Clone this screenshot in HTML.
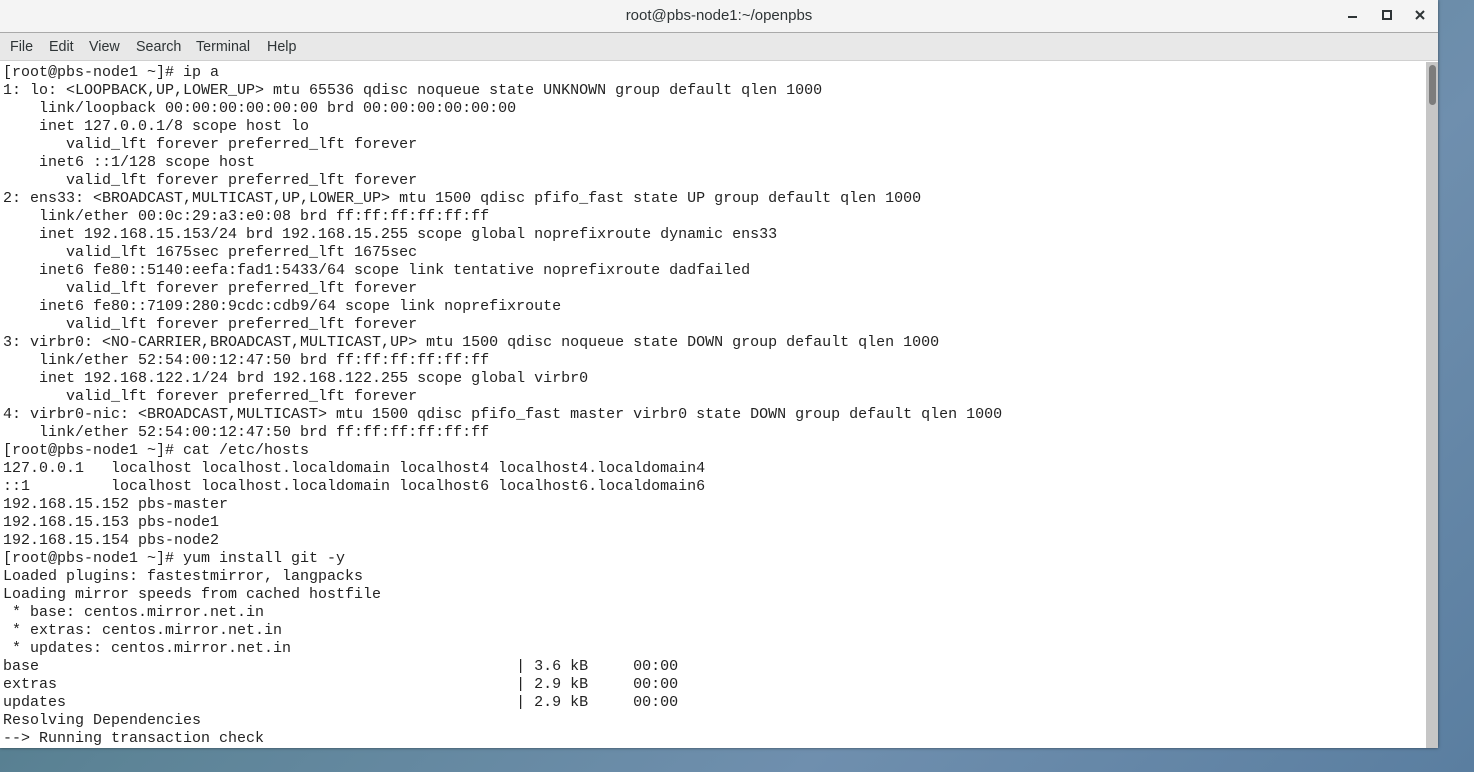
<!DOCTYPE html>
<html><head><style>
body{margin:0;width:1474px;height:772px;overflow:hidden;background:linear-gradient(135deg,#3f6b78 0%,#5d8497 40%,#6f8fae 70%,#5a7ea0 100%);font-family:"Liberation Sans",sans-serif;position:relative}
.win{position:absolute;left:0;top:0;width:1438px;height:748px;background:#fff;box-shadow:0 0 3px rgba(0,0,0,.5)}
.title{position:absolute;left:0;top:0;width:1438px;height:33px;background:#f4f4f4;border-bottom:1px solid #a9a9a9;box-sizing:border-box}
.title .t{position:absolute;left:0;width:1438px;top:7px;text-align:center;font-size:15px;color:#2e3436}
.menu{position:absolute;left:0;top:33px;width:1438px;height:28px;background:#e8e8e8;border-bottom:1px solid #d0d0d0;box-sizing:border-box;font-size:14.3px;color:#2e3436}
.menu span{position:absolute;top:6px}
pre{position:absolute;left:3px;top:64px;margin:0;font-family:"Liberation Mono",monospace;font-size:15px;line-height:18px;color:#222}
.sb{position:absolute;left:1426px;top:62px;width:12px;height:686px;background:#c6c6c6}
.th{position:absolute;left:1429px;top:65px;width:7px;height:40px;background:#7c7c7c;border-radius:4px}
.ctl{position:absolute;top:10px;}
</style></head><body>
<div class="win">
<div class="title"><div class="t">root@pbs-node1:~/openpbs</div>
<div class="ctl" style="left:1348px;top:16px;width:9px;height:2px;background:#2e3436"></div>
<div class="ctl" style="left:1382px;top:10px;width:6px;height:6px;border:2px solid #2e3436"></div>
<svg class="ctl" style="left:1415px;top:10px" width="10" height="10"><path d="M1 1L9 9M9 1L1 9" stroke="#2e3436" stroke-width="2"/></svg>
</div>
<div class="menu"><span style="left:10px">File</span><span style="left:49px">Edit</span><span style="left:89px">View</span><span style="left:136px">Search</span><span style="left:196px">Terminal</span><span style="left:267px">Help</span></div>
<pre>[root@pbs-node1 ~]# ip a
1: lo: &lt;LOOPBACK,UP,LOWER_UP&gt; mtu 65536 qdisc noqueue state UNKNOWN group default qlen 1000
    link/loopback 00:00:00:00:00:00 brd 00:00:00:00:00:00
    inet 127.0.0.1/8 scope host lo
       valid_lft forever preferred_lft forever
    inet6 ::1/128 scope host
       valid_lft forever preferred_lft forever
2: ens33: &lt;BROADCAST,MULTICAST,UP,LOWER_UP&gt; mtu 1500 qdisc pfifo_fast state UP group default qlen 1000
    link/ether 00:0c:29:a3:e0:08 brd ff:ff:ff:ff:ff:ff
    inet 192.168.15.153/24 brd 192.168.15.255 scope global noprefixroute dynamic ens33
       valid_lft 1675sec preferred_lft 1675sec
    inet6 fe80::5140:eefa:fad1:5433/64 scope link tentative noprefixroute dadfailed
       valid_lft forever preferred_lft forever
    inet6 fe80::7109:280:9cdc:cdb9/64 scope link noprefixroute
       valid_lft forever preferred_lft forever
3: virbr0: &lt;NO-CARRIER,BROADCAST,MULTICAST,UP&gt; mtu 1500 qdisc noqueue state DOWN group default qlen 1000
    link/ether 52:54:00:12:47:50 brd ff:ff:ff:ff:ff:ff
    inet 192.168.122.1/24 brd 192.168.122.255 scope global virbr0
       valid_lft forever preferred_lft forever
4: virbr0-nic: &lt;BROADCAST,MULTICAST&gt; mtu 1500 qdisc pfifo_fast master virbr0 state DOWN group default qlen 1000
    link/ether 52:54:00:12:47:50 brd ff:ff:ff:ff:ff:ff
[root@pbs-node1 ~]# cat /etc/hosts
127.0.0.1   localhost localhost.localdomain localhost4 localhost4.localdomain4
::1         localhost localhost.localdomain localhost6 localhost6.localdomain6
192.168.15.152 pbs-master
192.168.15.153 pbs-node1
192.168.15.154 pbs-node2
[root@pbs-node1 ~]# yum install git -y
Loaded plugins: fastestmirror, langpacks
Loading mirror speeds from cached hostfile
 * base: centos.mirror.net.in
 * extras: centos.mirror.net.in
 * updates: centos.mirror.net.in
base                                                     | 3.6 kB     00:00
extras                                                   | 2.9 kB     00:00
updates                                                  | 2.9 kB     00:00
Resolving Dependencies
--&gt; Running transaction check</pre>
<div class="sb"></div><div class="th"></div>
</div>
</body></html>
